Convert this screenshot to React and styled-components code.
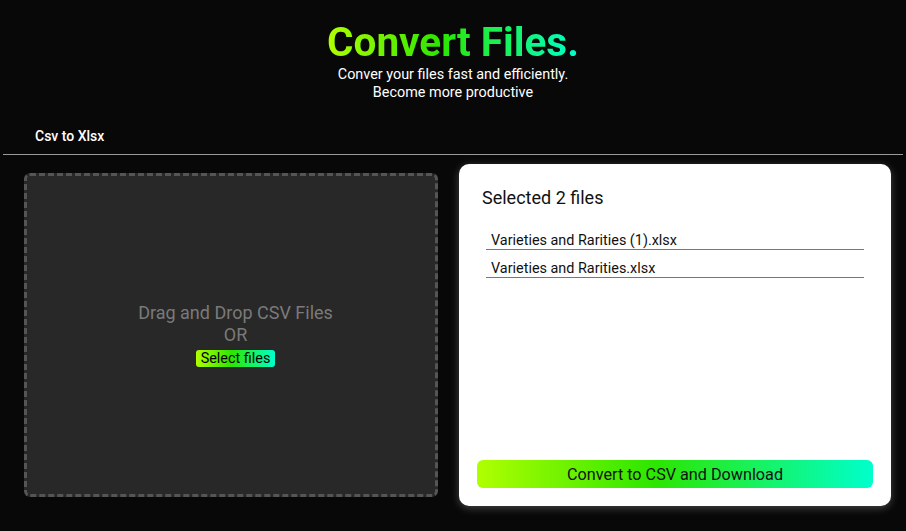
import React from 'react'
import styled, { createGlobalStyle } from 'styled-components'

const GlobalStyle = createGlobalStyle`
  html, body {
    margin: 0;
    padding: 0;
    background: #080808;
    font-family: Roboto, "Open Sans", sans-serif;
  }
  * {
    box-sizing: border-box;
  }
`

const gradient = 'linear-gradient(90deg, #b0ff00 0%, #2ce600 45%, #00ffcc 100%)'

const Page = styled.div`
  min-height: 531px;
  padding: 0 3px;
  color: #fff;
`

const Header = styled.header`
  display: flex;
  flex-direction: column;
  align-items: center;
  padding-top: 19px;
`

const Title = styled.h1`
  margin: 0;
  font-size: 40.5px;
  line-height: 47px;
  font-weight: 700;
  background: ${gradient};
  -webkit-background-clip: text;
  background-clip: text;
  color: transparent;
`

const Subtitle = styled.p`
  margin: 0;
  font-size: 14.4px;
  line-height: 18px;
  text-align: center;
`

const Tabs = styled.nav`
  display: flex;
  padding: 26px 0 0 32px;
  border-bottom: 1px solid #9a9a9a;
`

const Tab = styled.div`
  font-size: 14px;
  font-weight: 500;
  padding-bottom: 10px;
`

const Main = styled.main`
  display: flex;
  align-items: center;
  gap: 21px;
  padding: 9px 12px 0 21px;
`

const DropZone = styled.div`
  width: 414px;
  height: 324px;
  background: #282828;
  border: 3px dashed #555;
  border-radius: 6px;
  display: flex;
  flex-direction: column;
  align-items: center;
  justify-content: center;
  padding: 0 0 2px 9px;
  color: #7a7a7a;
  font-size: 18px;
  line-height: 22px;
`

const SelectButton = styled.button`
  margin-top: 4px;
  background: ${gradient};
  border: none;
  border-radius: 3px;
  padding: 0 5px;
  font-family: inherit;
  font-size: 14.4px;
  line-height: 17px;
  color: #000;
  cursor: pointer;
`

const Card = styled.section`
  width: 432px;
  height: 342px;
  background: #fff;
  border-radius: 10px;
  box-shadow: 0 2px 8px rgba(255, 255, 255, 0.25);
  color: #111;
  display: flex;
  flex-direction: column;
  padding: 23px 18px 18px 18px;
`

const CardTitle = styled.h2`
  margin: 0 0 0 5px;
  font-size: 18px;
  font-weight: 400;
  line-height: 22px;
`

const FileList = styled.ul`
  list-style: none;
  margin: 23px 9px 0 9px;
  padding: 0;
  display: flex;
  flex-direction: column;
  gap: 10px;
`

const FileItem = styled.li`
  font-size: 14.4px;
  line-height: 17px;
  padding-left: 5px;
  border-bottom: 1px solid #777;
`

const ConvertButton = styled.button`
  margin-top: auto;
  height: 28px;
  border: none;
  border-radius: 6px;
  background: ${gradient};
  font-family: inherit;
  font-size: 16.2px;
  color: #111;
  cursor: pointer;
`

const files = ['Varieties and Rarities (1).xlsx', 'Varieties and Rarities.xlsx']

export default function App() {
  return (
    <Page>
      <GlobalStyle />
      <Header>
        <Title>Convert Files.</Title>
        <Subtitle>Conver your files fast and efficiently.</Subtitle>
        <Subtitle>Become more productive</Subtitle>
      </Header>
      <Tabs>
        <Tab>Csv to Xlsx</Tab>
      </Tabs>
      <Main>
        <DropZone>
          <div>Drag and Drop CSV Files</div>
          <div>OR</div>
          <SelectButton>Select files</SelectButton>
        </DropZone>
        <Card>
          <CardTitle>Selected {files.length} files</CardTitle>
          <FileList>
            {files.map(f => (
              <FileItem key={f}>{f}</FileItem>
            ))}
          </FileList>
          <ConvertButton>Convert to CSV and Download</ConvertButton>
        </Card>
      </Main>
    </Page>
  )
}
